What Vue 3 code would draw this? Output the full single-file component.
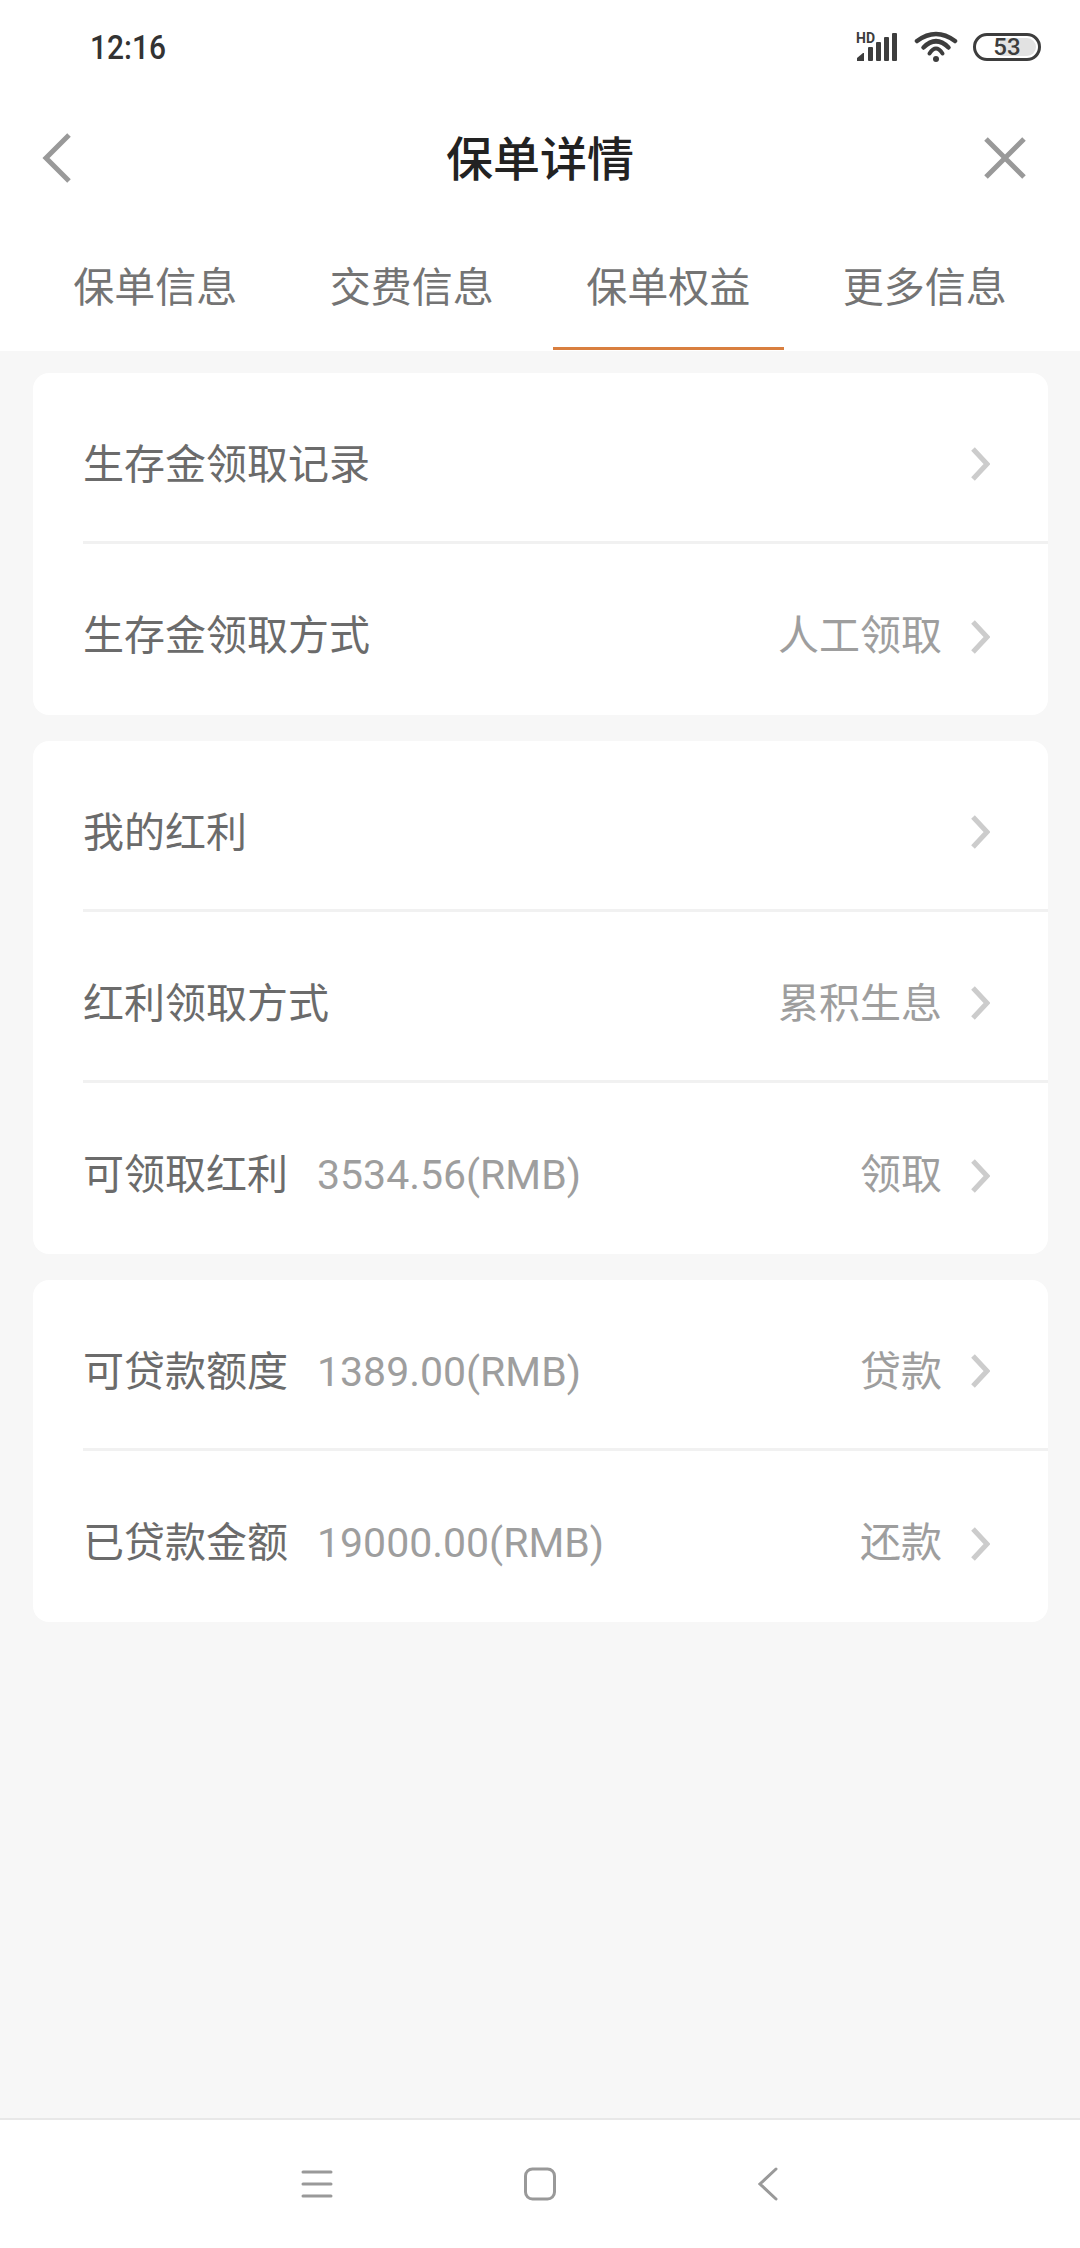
<script setup>
const tabs = ['保单信息', '交费信息', '保单权益', '更多信息']
const activeTab = 2

const groups = [
  [
    { label: '生存金领取记录' },
    { label: '生存金领取方式', action: '人工领取' }
  ],
  [
    { label: '我的红利' },
    { label: '红利领取方式', action: '累积生息' },
    { label: '可领取红利', value: '3534.56(RMB)', action: '领取' }
  ],
  [
    { label: '可贷款额度', value: '1389.00(RMB)', action: '贷款' },
    { label: '已贷款金额', value: '19000.00(RMB)', action: '还款' }
  ]
]
</script>

<template>
  <div class="page">
    <div class="status-bar">
      <span class="time">12:16</span>
      <div class="status-icons">
        <div class="signal">
          <span class="hd">HD</span>
          <svg width="44" height="32" viewBox="0 0 44 32" fill="#3d3d3d">
            <path d="M2 30v-3l6-5h1v8z" />
            <rect x="13" y="16" width="5" height="14" rx="1" />
            <rect x="21" y="11" width="5" height="19" rx="1" />
            <rect x="29" y="6" width="5" height="24" rx="1" />
            <rect x="37" y="2" width="5" height="28" rx="1" />
          </svg>
        </div>
        <svg width="44" height="32" viewBox="0 0 44 32" fill="none" stroke="#3d3d3d" stroke-width="4.5" stroke-linecap="round">
          <path d="M3 10Q22-4 41 10" />
          <path d="M9.500 16.500Q22 4 34.500 16.500" />
          <path d="M15.500 22.500Q22 12.500 28.500 22.500" stroke-width="4" />
          <circle cx="22" cy="28" r="3" fill="#3d3d3d" stroke="none" />
        </svg>
        <div class="battery">
          <span class="battery-fill"></span>
          <span class="battery-num">53</span>
        </div>
      </div>
    </div>

    <div class="nav-bar">
      <svg width="30" height="50" viewBox="0 0 30 50" fill="none" stroke="#999" stroke-width="5">
        <path d="M27 2 4 25l23 23" />
      </svg>
      <h1 class="title">保单详情</h1>
      <svg class="close" width="42" height="42" viewBox="0 0 42 42" fill="none" stroke="#999" stroke-width="5">
        <path d="M2 2l38 38M40 2 2 40" />
      </svg>
    </div>

    <div class="tabs">
      <div v-for="(tab, i) in tabs" :key="tab" class="tab" :class="{ active: i === activeTab }">
        {{ tab }}
      </div>
    </div>

    <div class="content">
      <div v-for="(group, g) in groups" :key="g" class="card">
        <div v-for="row in group" :key="row.label" class="row">
          <span class="label">{{ row.label }}</span>
          <span v-if="row.value" class="value">{{ row.value }}</span>
          <span class="action">{{ row.action }}</span>
          <svg class="chevron" width="20" height="36" viewBox="0 0 20 36" fill="none" stroke="#ccc" stroke-width="5">
            <path d="M3 3l14 15L3 33" />
          </svg>
        </div>
      </div>
    </div>

    <div class="bottom-nav">
      <svg width="32" height="30" viewBox="0 0 32 30" stroke="#999" stroke-width="3" stroke-linecap="round">
        <path d="M2 3h28M2 15h28M2 27h28" />
      </svg>
      <svg width="32" height="34" viewBox="0 0 32 34" fill="none" stroke="#999" stroke-width="3">
        <rect x="1.500" y="2" width="29" height="30" rx="7" />
      </svg>
      <svg class="nav-back" width="20" height="34" viewBox="0 0 20 34" fill="none" stroke="#999" stroke-width="3" stroke-linecap="round">
        <path d="M18 2 2 17l16 15" />
      </svg>
    </div>
  </div>
</template>

<style scoped>
.page {
  width: 1080px;
  height: 2248px;
  display: flex;
  flex-direction: column;
  background: #f7f7f7;
  font-family: Roboto, "Noto Sans CJK SC", sans-serif;
  overflow: hidden;
}
.status-bar {
  height: 94px;
  display: flex;
  align-items: center;
  justify-content: space-between;
  padding: 0 39px 0 90px;
  background: #fff;
}
.time {
  font-size: 34px;
  font-weight: 500;
  color: #333;
  transform: scaleX(0.88);
  transform-origin: left center;
}
.status-icons {
  display: flex;
  align-items: center;
  gap: 15px;
}
.signal {
  position: relative;
  width: 44px;
  height: 32px;
}
.hd {
  position: absolute;
  left: 1px;
  top: 0;
  font-size: 14px;
  line-height: 14px;
  font-weight: 700;
  color: #3d3d3d;
}
.battery {
  position: relative;
  width: 68px;
  height: 28px;
  box-sizing: border-box;
  border: 3px solid #3d3d3d;
  border-radius: 14px;
  display: flex;
  align-items: center;
  justify-content: center;
  overflow: hidden;
}
.battery-fill {
  position: absolute;
  top: 2px;
  bottom: 2px;
  left: 24px;
  width: 36px;
  border-radius: 0 10px 10px 0;
  background: #e2e2e2;
}
.battery-num {
  position: relative;
  font-size: 24px;
  line-height: 22px;
  font-weight: 500;
  color: #3d3d3d;
}
.nav-bar {
  height: 128px;
  display: grid;
  grid-template-columns: 1fr auto 1fr;
  align-items: center;
  padding: 0 54px 0 42px;
  background: #fff;
}
.title {
  margin: 0 0 6px 12px;
  font-size: 47px;
  font-weight: 500;
  color: #222;
}
.close {
  justify-self: end;
}
.tabs {
  height: 129px;
  display: flex;
  padding: 0 27px;
  background: #fff;
}
.tab {
  flex: 1;
  display: flex;
  align-items: center;
  justify-content: center;
  padding-bottom: 5px;
  font-size: 41px;
  color: #747474;
  position: relative;
}
.tab.active::after {
  content: "";
  position: absolute;
  left: 13px;
  right: 13px;
  bottom: 1px;
  height: 3px;
  background: #d97f3f;
}
.content {
  flex: 1;
  display: flex;
  flex-direction: column;
  gap: 26px;
  padding: 22px 32px 0 33px;
}
.card {
  background: #fff;
  border-radius: 16px;
  padding-left: 50px;
}
.row {
  height: 171px;
  box-sizing: border-box;
  display: flex;
  align-items: baseline;
  padding: 10px 58px 0 0;
  font-size: 41px;
  border-bottom: 3px solid #f1f1f1;
}
.row:last-child {
  border-bottom: none;
}
.label,
.value,
.action {
  line-height: 164px;
}
.label {
  color: #6b6b6b;
}
.value {
  margin-left: 29px;
  color: #9e9e9e;
}
.action {
  margin-left: auto;
  color: #9e9e9e;
}
.chevron {
  margin-left: 28px;
  align-self: center;
  margin-top: 4px;
}
.bottom-nav {
  height: 130px;
  box-sizing: border-box;
  border-top: 2px solid #e8e8e8;
  background: #fff;
  display: flex;
  align-items: center;
  padding-left: 301px;
  gap: 191px;
}
.nav-back {
  margin-left: 11px;
}
</style>
